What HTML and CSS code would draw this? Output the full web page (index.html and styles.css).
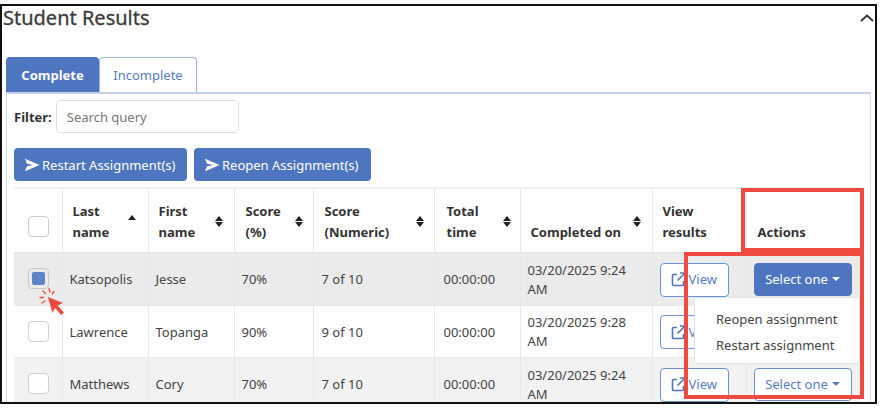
FILE: index.html
```html
<!DOCTYPE html>
<html lang="en">
<head>
<meta charset="utf-8">
<title>Student Results</title>
<link rel="stylesheet" href="styles.css">
</head>
<body>
<div class="frame">
  <header class="head">
    <h1>Student Results</h1>
    <svg class="chev" width="14" height="8" viewBox="0 0 14 8"><path d="M1 7L7 1.5L13 7" fill="none" stroke="#333" stroke-width="1.8"/></svg>
  </header>
  <nav class="tabs">
    <a class="tab active">Complete</a>
    <a class="tab">Incomplete</a>
  </nav>
  <section class="panel">
    <div class="filter">
      <label>Filter:</label>
      <div class="search">Search query</div>
    </div>
    <div class="actions">
      <button class="btn"><svg width="16" height="14" viewBox="0 0 16 14"><path d="M1 .8L15.5 7L1 13.2L3 8.2L9.5 7L3 5.8Z" fill="#fff"/></svg>Restart Assignment(s)</button>
      <button class="btn"><svg width="16" height="14" viewBox="0 0 16 14"><path d="M1 .8L15.5 7L1 13.2L3 8.2L9.5 7L3 5.8Z" fill="#fff"/></svg>Reopen Assignment(s)</button>
    </div>
    <table>
      <colgroup>
        <col class="c1"><col class="c2"><col class="c3"><col class="c4"><col class="c5"><col class="c6"><col class="c7"><col class="c8"><col class="c9">
      </colgroup>
      <thead>
        <tr>
          <th><span class="box hbox"></span></th>
          <th><div class="th"><span>Last<br>name</span><i class="sort asc"></i></div></th>
          <th><div class="th"><span>First<br>name</span><i class="sort"></i></div></th>
          <th><div class="th"><span>Score<br>(%)</span><i class="sort"></i></div></th>
          <th><div class="th"><span>Score<br>(Numeric)</span><i class="sort"></i></div></th>
          <th><div class="th"><span>Total<br>time</span><i class="sort"></i></div></th>
          <th><div class="th"><span>Completed on</span><i class="sort solo"></i></div></th>
          <th><div class="th"><span>View<br>results</span></div></th>
          <th><div class="th"><span>Actions</span></div></th>
        </tr>
      </thead>
      <tbody>
        <tr class="sel">
          <td><span class="box on"><b></b></span></td><td>Katsopolis</td><td>Jesse</td><td>70%</td><td>7 of 10</td><td>00:00:00</td><td>03/20/2025 9:24 AM</td>
          <td><a class="view"><svg width="15" height="15" viewBox="0 0 15 15"><path d="M6 2.5H2.5a1 1 0 0 0-1 1v9a1 1 0 0 0 1 1h9a1 1 0 0 0 1-1V9M9 1h5v5M14 1L6.5 8.5" fill="none" stroke="#4e75bf" stroke-width="1.6"/></svg>View</a></td>
          <td><a class="sel-btn solid">Select one<i></i></a></td>
        </tr>
        <tr class="r2">
          <td><span class="box"></span></td><td>Lawrence</td><td>Topanga</td><td>90%</td><td>9 of 10</td><td>00:00:00</td><td>03/20/2025 9:28 AM</td>
          <td><a class="view"><svg width="15" height="15" viewBox="0 0 15 15"><path d="M6 2.5H2.5a1 1 0 0 0-1 1v9a1 1 0 0 0 1 1h9a1 1 0 0 0 1-1V9M9 1h5v5M14 1L6.5 8.5" fill="none" stroke="#4e75bf" stroke-width="1.6"/></svg>View</a></td>
          <td></td>
        </tr>
        <tr class="r3">
          <td><span class="box"></span></td><td>Matthews</td><td>Cory</td><td>70%</td><td>7 of 10</td><td>00:00:00</td><td>03/20/2025 9:24 AM</td>
          <td><a class="view"><svg width="15" height="15" viewBox="0 0 15 15"><path d="M6 2.5H2.5a1 1 0 0 0-1 1v9a1 1 0 0 0 1 1h9a1 1 0 0 0 1-1V9M9 1h5v5M14 1L6.5 8.5" fill="none" stroke="#4e75bf" stroke-width="1.6"/></svg>View</a></td>
          <td><a class="sel-btn">Select one<i></i></a></td>
        </tr>
      </tbody>
    </table>
  </section>
  <div class="menu"><div>Reopen assignment</div><div>Restart assignment</div></div>
  <div class="mark m1"></div>
  <div class="mark m2"></div>
  <svg class="cursor" width="32" height="36" viewBox="0 0 32 36">
    <g stroke="#f0493e" stroke-width="1.3" fill="none" stroke-linecap="round">
      <path d="M12 2.5L13 6M6 5L8.5 7.5M3 11.5L6.5 11.5M5 17L8 15M17 5.5L15 8"/>
    </g>
    <path d="M11 11L26 17L20.5 19.5L27 26.5L24 29L18 22L15.5 27Z" fill="#f0493e"/>
  </svg>
</div>
</body>
</html>
```

FILE: styles.css
```css
* { box-sizing: border-box; }
html, body { margin: 0; padding: 0; background: #fff; }
body {
  font-family: "Noto Sans", "Open Sans", sans-serif;
  font-size: 13px;
  color: #444;
  width: 884px;
  height: 412px;
  overflow: hidden;
}
.frame {
  position: relative;
  width: 877px;
  height: 400px;
  margin-top: 4px;
  border: 2px solid #111;
  overflow: hidden;
  background: #fff;
}
.head {
  display: flex;
  justify-content: space-between;
  height: 51px;
  padding-left: 1px;
}
h1 {
  margin: 0;
  font-size: 20px;
  line-height: 23px;
  font-weight: 400;
  color: #3a3a3a;
  -webkit-text-stroke: 0.3px #3a3a3a;
}
.chev { margin: 8px 1px 0 0; }
.tabs {
  display: flex;
  margin-left: 4px;
  height: 35px;
}
.tab {
  display: flex;
  align-items: center;
  justify-content: center;
  color: #5a7cc4;
  border: 1px solid #9fb3df;
  border-bottom: 0;
  border-radius: 4px 4px 0 0;
  width: 98px;
}
.tab.active {
  width: 93px;
  background: #4e75bf;
  border-color: #4e75bf;
  color: #fff;
  font-weight: 700;
}
.panel {
  width: 865px;
  height: 320px;
  margin-left: 4px;
  border: 1px solid #d5dcee;
  border-top: 2px solid #c3cfe8;
  padding: 6px 7px 0;
}
.filter {
  display: flex;
  align-items: center;
  gap: 4px;
  height: 33px;
}
.filter label { font-weight: 700; color: #333; }
.search {
  width: 183px;
  height: 33px;
  border: 1px solid #dee2e6;
  border-radius: 4px;
  padding: 0 10px;
  line-height: 32px;
  color: #777;
}
.actions {
  display: flex;
  gap: 7px;
  margin-top: 15px;
}
.btn {
  display: flex;
  align-items: center;
  gap: 2px;
  height: 33px;
  padding: 0 10px;
  border: 0;
  border-radius: 4px;
  background: #4e75bf;
  color: #fff;
  font: inherit;
  white-space: nowrap;
}
.btn svg { flex: none; }
.btn:first-child { width: 173px; }
.btn:last-child { width: 177px; }
table {
  table-layout: fixed;
  border-collapse: collapse;
  width: 846px;
  margin-top: 6px;
}
.c1 { width: 48px; } .c2 { width: 86px; } .c3 { width: 86px; } .c4 { width: 79px; }
.c5 { width: 121px; } .c6 { width: 86px; } .c7 { width: 132px; } .c8 { width: 94px; } .c9 { width: 114px; }
th, td { border: 1px solid #e6e8ee; padding: 0 7px; }
thead tr { height: 64px; }
thead tr th { border-top: 2px solid #f0f1f4; border-bottom: 1px solid #e0e2e8; vertical-align: bottom; padding-bottom: 9px; text-align: left; color: #333; line-height: 21px; font-weight: 700; }
thead th:first-child { padding: 0 0 15px 14px; }
thead th:nth-child(4), thead th:nth-child(5), thead th:nth-child(9) { padding-left: 8px; }
thead th:nth-child(4), thead th:nth-child(5) { padding-right: 6px; }
thead th:nth-child(6) { padding-left: 9px; padding-right: 5px; }
th:first-child, td:first-child { border-left: 0; }
th:last-child, td:last-child { border-right: 0; }
.th { display: flex; justify-content: space-between; padding-left: 3px; position: relative; }
.sort { position: absolute; right: 3px; top: 15px; width: 9px; height: 11px; }
.sort::before, .sort::after { content: ""; position: absolute; left: 0; border-left: 4.5px solid transparent; border-right: 4.5px solid transparent; }
.sort::before { top: 0; border-bottom: 5px solid #222; }
.sort::after { bottom: 0; border-top: 5px solid #222; }
.sort.asc { top: 14px; right: 4px; height: 5px; }
.sort.asc::after { display: none; }
.sort.solo { top: -6px; }
tbody tr { height: 53px; line-height: 19px; }
tbody td { vertical-align: middle; padding-top: 2px; }
tbody td:first-child { padding: 0 0 0 14px; }
tbody td:nth-child(5) { padding-left: 8px; }
tbody td:nth-child(6) { padding-left: 9px; }
.sel td { background: #ebebeb; }
.r2 { height: 52px; }
.r3 td { background: #f2f2f2; }
.box { display: block; width: 21px; height: 21px; border: 1px solid #cfd1d4; border-radius: 4px; background: #fff; }
.box.on { background: #ebebeb; padding: 3px; border-color: #cacaca; }
.box.on b { display: block; width: 13px; height: 13px; border-radius: 2px; background: #5e86c7; }
.box.hbox { border-color: #c9ccd0; }
.view {
  display: flex;
  align-items: center;
  gap: 3px;
  width: 69px;
  height: 34px;
  padding-left: 10px;
  border: 1px solid #6f90d0;
  border-radius: 4px;
  background: #fff;
  color: #5a7cc4;
}
.view svg { flex: none; }
.sel-btn {
  display: flex;
  align-items: center;
  justify-content: center;
  gap: 4px;
  width: 98px;
  height: 33px;
  border: 1px solid #6f90d0;
  border-radius: 4px;
  background: #fff;
  color: #5a7cc4;
}
.sel-btn.solid { background: #4e75bf; border-color: #4e75bf; color: #fff; }
.sel-btn i { border-left: 4px solid transparent; border-right: 4px solid transparent; border-top: 4px solid currentColor; margin-top: -2px; }
.menu {
  position: absolute;
  left: 692px;
  top: 291px;
  width: 166px;
  height: 67px;
  border: 1px solid #dfe1e5;
  border-radius: 4px;
  background: #fff;
  padding: 8px 0 0 21px;
  line-height: 26px;
  color: #444;
}
.mark { position: absolute; border: 4px solid #ef4a3f; }
.m1 { left: 739px; top: 182px; width: 123px; height: 64px; }
.m2 { left: 682px; top: 246px; width: 180px; height: 147px; }
.cursor { position: absolute; left: 35px; top: 280px; }
```
